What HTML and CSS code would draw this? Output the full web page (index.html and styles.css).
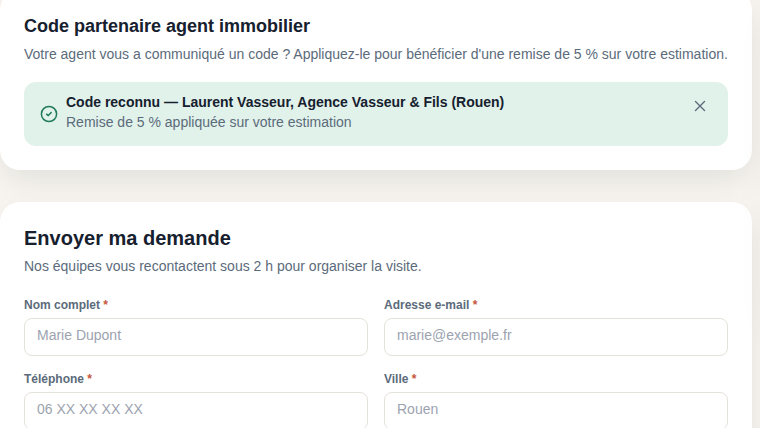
FILE: index.html
```html
<!DOCTYPE html>
<html lang="fr">
<head>
<meta charset="utf-8">
<meta name="viewport" content="width=device-width, initial-scale=1">
<title>Envoyer ma demande</title>
<link rel="stylesheet" href="styles.css">
</head>
<body>
<div class="layout">
  <main class="column">
    <section class="card card-code">
      <h3 class="subtitle">Code partenaire agent immobilier</h3>
      <p class="lead">Votre agent vous a communiqué un code ? Appliquez-le pour bénéficier d'une remise de 5 % sur votre estimation.</p>
      <div class="notice" role="status">
        <svg class="notice-icon" viewBox="0 0 18 18" aria-hidden="true"><circle cx="9" cy="9" r="7.6"/><path d="M6.6 9.2l1.7 1.4 2.9-3"/></svg>
        <div class="notice-text">
          <strong class="notice-title">Code reconnu — Laurent Vasseur, Agence Vasseur &amp; Fils (Rouen)</strong>
          <span class="notice-detail">Remise de 5 % appliquée sur votre estimation</span>
        </div>
        <button class="close" type="button" aria-label="Retirer le code"><svg viewBox="0 0 16 16" aria-hidden="true"><path d="M3.5 3.5l9 9M12.5 3.5l-9 9"/></svg></button>
      </div>
    </section>
    <section class="card">
      <h2 class="title">Envoyer ma demande</h2>
      <p class="lead">Nos équipes vous recontactent sous 2 h pour organiser la visite.</p>
      <form class="fields">
        <div class="field"><label for="nom">Nom complet <span class="required">*</span></label><input id="nom" type="text" placeholder="Marie Dupont"></div>
        <div class="field"><label for="email">Adresse e-mail <span class="required">*</span></label><input id="email" type="email" placeholder="marie@exemple.fr"></div>
        <div class="field"><label for="tel">Téléphone <span class="required">*</span></label><input id="tel" type="tel" placeholder="06 XX XX XX XX"></div>
        <div class="field"><label for="ville">Ville <span class="required">*</span></label><input id="ville" type="text" placeholder="Rouen"></div>
      </form>
    </section>
  </main>
  <aside class="summary"></aside>
</div>
</body>
</html>
```
FILE: styles.css
```css
* { box-sizing: border-box; }
html { overflow: hidden; }
body {
  margin: 0;
  background: #f8f4ef;
  color: #16202e;
  font-family: "Helvetica Neue", Helvetica, "Liberation Sans", Arial, sans-serif;
  font-size: 14px;
  line-height: 20px;
}
h2, h3, p { margin: 0; }
.layout { display: flex; gap: 32px; align-items: flex-start; overflow: hidden; }
.column {
  flex: 0 0 calc(100% - 8px);
  display: flex;
  flex-direction: column;
  gap: 32px;
  margin-top: -10px;
}
.card {
  padding: 24px;
  border-radius: 20px;
  background: #fff;
  box-shadow: 0 12px 32px -4px rgba(10, 50, 50, 0.1);
}
.summary {
  flex: 0 0 360px;
  height: 320px;
  border-radius: 20px;
  background: #fff;
  box-shadow: 0 12px 48px rgba(10, 50, 50, 0.1);
}
.subtitle { font-size: 18px; line-height: 24px; font-weight: 700; }
.title { font-size: 20px; line-height: 24px; font-weight: 700; }
.lead { margin-top: 6px; color: #5b6b7b; }
.notice {
  display: flex;
  align-items: center;
  gap: 8px;
  margin-top: 18px;
  padding: 12px 16px;
  border-radius: 12px;
  background: #e1f2ea;
}
.notice-icon { flex: none; width: 18px; height: 18px; fill: none; stroke: #1f7a5a; stroke-width: 1.5; stroke-linecap: round; stroke-linejoin: round; }
.notice-text { flex: 1; margin-top: -2px; padding-bottom: 2px; }
.notice-title, .notice-detail { display: block; }
.notice-detail { color: #5b6b7b; }
.close {
  align-self: flex-start;
  padding: 4px;
  border: 0;
  background: none;
  color: #5b6b7b;
  cursor: pointer;
}
.close svg { display: block; width: 16px; height: 16px; fill: none; stroke: currentColor; stroke-width: 1.4; stroke-linecap: round; }
.fields {
  display: grid;
  grid-template-columns: 1fr 1fr;
  gap: 14px 16px;
  margin-top: 20px;
}
.field { display: flex; flex-direction: column; gap: 4px; }
.field label { font-size: 12px; line-height: 18px; font-weight: 700; color: #5b6b7b; }
.required { color: #c8553d; }
.field input {
  width: 100%;
  height: 38px;
  padding: 0 12px 4px;
  border: 1px solid #e5e2da;
  border-radius: 8px;
  background: #fff;
  color: #16202e;
  font: inherit;
}
.field input::placeholder { color: #9ca3af; opacity: 1; }
```
